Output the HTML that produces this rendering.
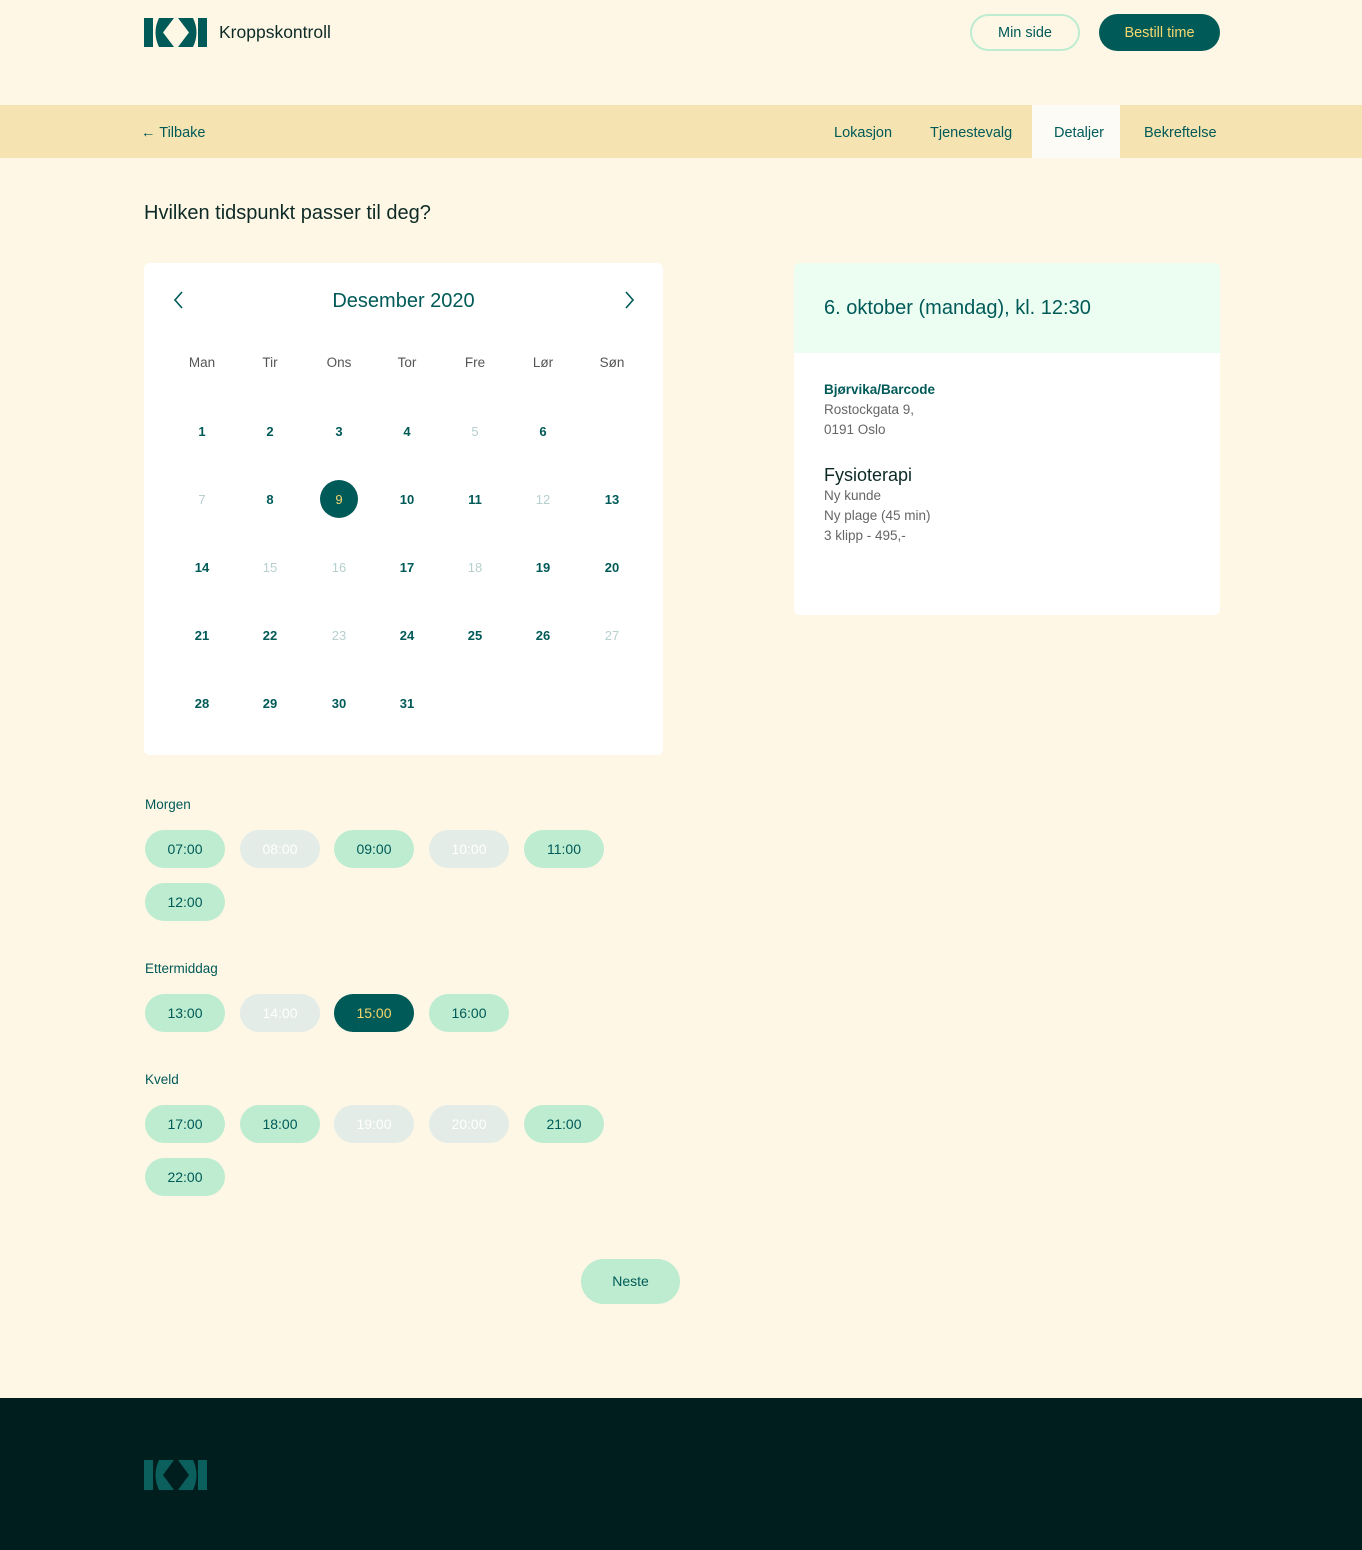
<!DOCTYPE html>
<html><head><meta charset="utf-8"><style>
*{margin:0;padding:0;box-sizing:border-box}
body{width:1362px;height:1550px;background:#fff7e6;font-family:"Liberation Sans",sans-serif;position:relative;overflow:hidden;color:#005a58}
.a{position:absolute}
.btn{position:absolute;border-radius:19px;text-align:center;font-size:14.5px}
.nav{position:absolute;top:105px;left:0;width:1362px;height:53px;background:#f5e3b2}
.nav span{position:absolute;top:20px;font-size:14.5px;color:#005a58}
.cal{position:absolute;left:144px;top:263px;width:519px;height:492px;background:#fff;border-radius:6px}
.d{position:absolute;width:40px;margin-left:-20px;text-align:center;font-size:13px;font-weight:bold;color:#005a58}
.d.g{color:#b7cfcf;font-weight:normal}
.h{position:absolute;width:50px;margin-left:-25px;text-align:center;font-size:13.5px;color:#555}
.s{position:absolute;width:80px;height:38px;border-radius:19px;background:#bdecd0;color:#005a58;font-size:14px;text-align:center;line-height:38px}
.s.x{background:#e3ece6;color:#fff}
.s.on{background:#005a58;color:#f5d76e}
.lab{position:absolute;left:145px;font-size:13.5px;color:#005a58}
</style></head><body>
<svg class="a" style="left:0;top:0" width="220" height="60"><g fill="#005a58"><rect x="144" y="18" width="9" height="29"/><path d="M159 18 L174 18 L163 32.5 L174 47 L159 47 Q152 32.5 159 18Z"/><path d="M178 18 L193 18 Q200 32.5 193 47 L178 47 L189 32.5Z"/><rect x="198" y="18" width="9" height="29"/></g></svg>
<div class="a" style="left:219px;top:22px;font-size:17.5px;color:#0d2a26">Kroppskontroll</div>
<div class="btn" style="left:970px;top:14px;width:110px;height:37px;border:2px solid #bdecd0;line-height:35px">Min side</div>
<div class="btn" style="left:1099px;top:14px;width:121px;height:37px;background:#005a58;color:#f5d76e;line-height:39px">Bestill time</div>
<div class="nav">
<span style="left:141px">← Tilbake</span>
<span style="left:834px">Lokasjon</span>
<span style="left:930px">Tjenestevalg</span>
<div class="a" style="left:1032px;top:0;width:88px;height:53px;background:#fdfbf5"></div>
<span style="left:1054px">Detaljer</span>
<span style="left:1144px">Bekreftelse</span>
</div>
<div class="a" style="left:144px;top:202px;font-size:20px;color:#0d2a26">Hvilken tidspunkt passer til deg?</div>
<div class="cal">
<svg class="a" style="left:28px;top:27px" width="14" height="20"><path d="M10 2 L3 10 L10 18" stroke="#005a58" stroke-width="1.6" fill="none"/></svg>
<svg class="a" style="left:478px;top:27px" width="14" height="20"><path d="M4 2 L11 10 L4 18" stroke="#005a58" stroke-width="1.6" fill="none"/></svg>
<div class="a" style="left:0;width:519px;top:27px;text-align:center;font-size:20px">Desember 2020</div>
</div>
<div class="a" style="left:320px;top:480px;width:38px;height:38px;border-radius:50%;background:#005a58"></div>
<div id="cal"></div>
<div class="a" style="left:794px;top:263px;width:426px;height:352px;background:#fff;border-radius:6px;overflow:hidden">
<div style="height:90px;background:#ecfdf2;padding:34px 30px;font-size:20px;color:#005a58">6. oktober (mandag), kl. 12:30</div>
<div style="padding:27px 30px 0;font-size:13.5px;line-height:20px;color:#666">
<div style="color:#005a58;font-weight:bold">Bjørvika/Barcode</div>Rostockgata 9,<br>0191 Oslo
<div style="font-size:18px;color:#0d2a26;margin-top:24px;line-height:22px">Fysioterapi</div>Ny kunde<br>Ny plage (45 min)<br>3 klipp - 495,-</div>
</div>
<div class="lab" style="top:797px">Morgen</div>
<div class="s" style="left:145px;top:830px">07:00</div><div class="s x" style="left:240px;top:830px">08:00</div><div class="s" style="left:334px;top:830px">09:00</div><div class="s x" style="left:429px;top:830px">10:00</div><div class="s" style="left:524px;top:830px">11:00</div>
<div class="s" style="left:145px;top:883px">12:00</div>
<div class="lab" style="top:961px">Ettermiddag</div>
<div class="s" style="left:145px;top:994px">13:00</div><div class="s x" style="left:240px;top:994px">14:00</div><div class="s on" style="left:334px;top:994px">15:00</div><div class="s" style="left:429px;top:994px">16:00</div>
<div class="lab" style="top:1072px">Kveld</div>
<div class="s" style="left:145px;top:1105px">17:00</div><div class="s" style="left:240px;top:1105px">18:00</div><div class="s x" style="left:334px;top:1105px">19:00</div><div class="s x" style="left:429px;top:1105px">20:00</div><div class="s" style="left:524px;top:1105px">21:00</div>
<div class="s" style="left:145px;top:1158px">22:00</div>
<div class="s" style="left:581px;top:1259px;width:99px;height:45px;border-radius:23px;line-height:45px">Neste</div>
<div class="a" style="left:0;top:1398px;width:1362px;height:152px;background:#001e1e"></div>
<svg class="a" style="left:0;top:1442px" width="220" height="60"><g fill="#0b5f5c"><rect x="144" y="18" width="9" height="30"/><path d="M159 18 L174 18 L163 33 L174 48 L159 48 Q152 33 159 18Z"/><path d="M178 18 L193 18 Q200 33 193 48 L178 48 L189 33Z"/><rect x="198" y="18" width="9" height="30"/></g></svg>
<script>
var xs=[202,270,339,407,475,543,612],ys=[431,499,567,635,703],h=["Man","Tir","Ons","Tor","Fre","Lør","Søn"],g=[5,7,12,15,16,18,23,27],o="";
h.forEach(function(t,i){o+='<div class="h" style="left:'+xs[i]+'px;top:355px">'+t+'</div>'});
var cells=[];for(var n=1;n<=6;n++)cells.push([n,0,n-1]);for(var n=7;n<=31;n++){var p=n-7;cells.push([n,1+Math.floor(p/7),p%7]);}
cells.forEach(function(e){var cls="d"+(g.indexOf(e[0])>=0?" g":"");var st=e[0]==9?"color:#f5d76e;font-weight:normal;":"";o+='<div class="'+cls+'" style="'+st+'left:'+xs[e[2]]+'px;top:'+(ys[e[1]]-7)+'px">'+e[0]+'</div>'});
document.getElementById("cal").innerHTML=o;
</script>
</body></html>
